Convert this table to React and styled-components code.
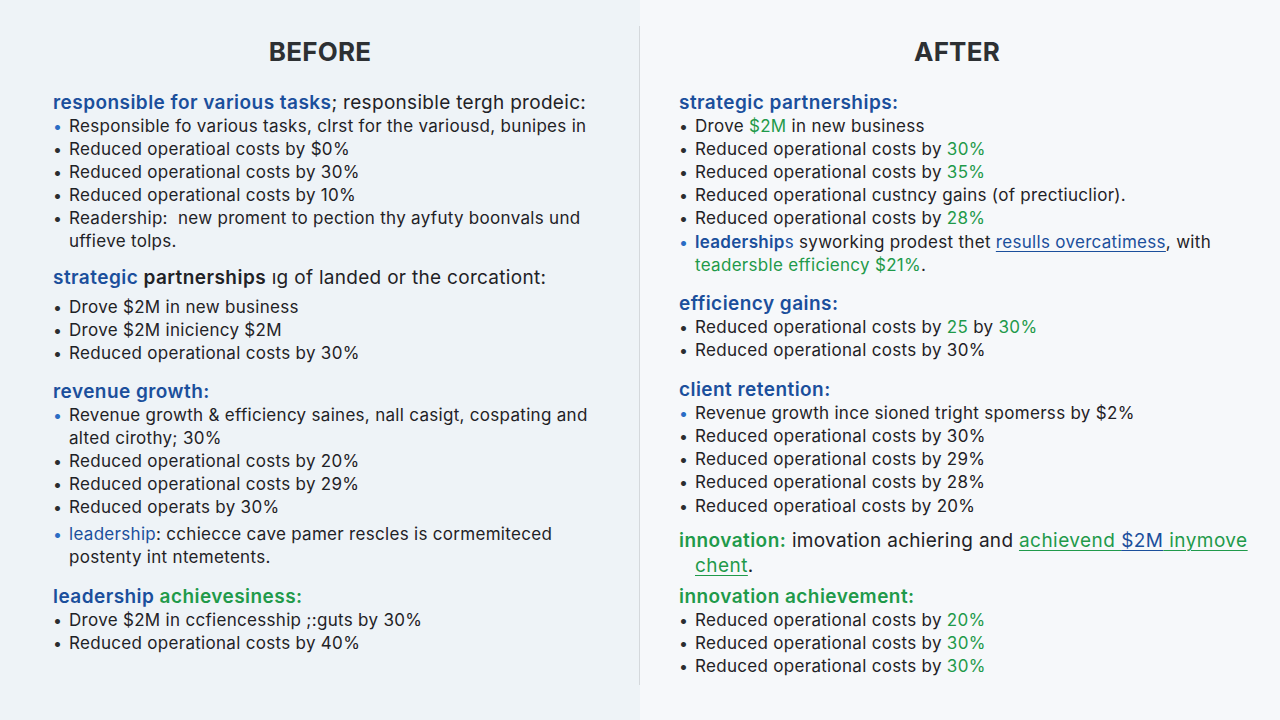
import React from 'react';
import styled, { createGlobalStyle } from 'styled-components';

const GlobalStyle = createGlobalStyle`
  html, body {
    margin: 0;
    padding: 0;
    background: #f6f8fa;
  }
  body {
    font-family: Inter, "Noto Sans", sans-serif;
    color: #1f2226;
  }
`;

const Page = styled.div`
  display: grid;
  grid-template-columns: 639px 1px 640px;
  width: 1280px;
  height: 720px;
  overflow: hidden;
`;

const Column = styled.section`
  background: ${(p) => (p.$tint ? '#eef3f7' : '#f6f8fa')};
  padding: ${(p) => (p.$tint ? '34px 42px 0 53px' : '34px 28px 0 39px')};
`;

const DividerCell = styled.div`
  background: #eef3f7;
  display: flex;
`;

const DividerLine = styled.div`
  flex: 1;
  margin: 26px 0 35px;
  background: #d4d8dc;
`;

const Title = styled.h1`
  margin: 0 0 20px;
  padding-right: ${(p) => p.$shift || 0}px;
  text-align: center;
  font-size: 26px;
  font-weight: 700;
  line-height: 36px;
  color: #2d3033;
  letter-spacing: 0.2px;
`;

const Section = styled.div`
  margin-bottom: ${(p) => p.$gap || 12}px;
`;

const Heading = styled.h2`
  margin: 0 0 ${(p) => p.$after || 0}px;
  font-size: 19px;
  font-weight: 600;
  line-height: 25px;
  letter-spacing: 0.45px;
  color: #1b4f9c;
  padding-left: ${(p) => (p.$hang ? 16 : 0)}px;
  text-indent: ${(p) => (p.$hang ? -16 : 0)}px;
`;

const List = styled.ul`
  list-style: none;
  margin: 0;
  padding: 0;
`;

const Item = styled.li`
  display: flex;
  margin-top: ${(p) => p.$lift || 0}px;
  font-size: 17px;
  line-height: 23px;
  letter-spacing: 0.3px;
  color: #1f2226;
`;

const Bullet = styled.span`
  flex: 0 0 16px;
  color: ${(p) => (p.$blue ? '#2a6cc4' : '#2b2d30')};
  font-size: 16px;
`;

const Text = styled.span`
  flex: 1;
`;

const Seg = styled.span`
  font-weight: ${(p) =>
    p.$kind === 'normal' || p.$kind === 'blueLink' || p.$kind === 'greenLink'
      ? 400
      : p.$bold
      ? 600
      : 'inherit'};
  letter-spacing: ${(p) => (p.$kind === 'normal' ? '0.3px' : 'inherit')};
  color: ${(p) =>
    p.$kind === 'blue' || p.$kind === 'blueLink'
      ? '#1b4f9c'
      : p.$kind === 'green' || p.$kind === 'greenLink'
      ? '#1f9a4a'
      : p.$kind === 'dark' || p.$kind === 'normal'
      ? '#1f2226'
      : 'inherit'};
  text-decoration: ${(p) =>
    p.$kind === 'blueLink' || p.$kind === 'greenLink' ? 'underline' : 'none'};
  text-underline-offset: 3px;
  text-decoration-thickness: 1px;
`;

const renderSegs = (segs) =>
  segs.map((s, i) =>
    typeof s === 'string' ? (
      <React.Fragment key={i}>{s}</React.Fragment>
    ) : (
      <Seg key={i} $kind={s.k} $bold={s.b}>
        {s.t}
      </Seg>
    )
  );

const before = [
  {
    heading: [{ t: 'responsible for various tasks', k: 'blue' }, { t: '; responsible tergh prodeic:', k: 'normal' }],
    gap: 12,
    items: [
      { blue: true, text: ['Responsible fo various tasks, clrst for the variousd, bunipes in'] },
      { text: ['Reduced operatioal costs by $0%'] },
      { text: ['Reduced operational costs by 30%'] },
      { text: ['Reduced operational costs by 10%'] },
      { text: ['Readership:\u00a0 new proment to pection thy ayfuty boonvals und uffieve tolps.'] },
    ],
  },
  {
    heading: [
      { t: 'strategic ', k: 'blue' },
      { t: 'partnerships', k: 'dark', b: true },
      { t: ' ıg of landed or the corcationt:', k: 'normal' },
    ],
    after: 6,
    gap: 14,
    items: [
      { text: ['Drove $2M in new business'] },
      { text: ['Drove $2M iniciency $2M'] },
      { text: ['Reduced operational costs by 30%'] },
    ],
  },
  {
    heading: [{ t: 'revenue growth:', k: 'blue' }],
    gap: 15,
    items: [
      { blue: true, text: ['Revenue growth & efficiency saines, nall casigt, cospating and alted cirothy; 30%'] },
      { text: ['Reduced operational costs by 20%'] },
      { text: ['Reduced operational costs by 29%'] },
      { text: ['Reduced operats by 30%'] },
      {
        blue: true,
        lift: 4,
        text: [
          { t: 'leadership', k: 'blue' },
          { t: ': cchiecce cave pamer rescles is cormemiteced ' },
          { t: 'postenty int ntemetents.' },
        ],
      },
    ],
  },
  {
    heading: [{ t: 'leadership', k: 'blue' }, { t: ' achievesiness:', k: 'green' }],
    items: [
      { text: ['Drove $2M in ccfiencesship ;:guts by 30%'] },
      { text: ['Reduced operational costs by 40%'] },
    ],
  },
];

const pct = (v) => ['Reduced operational costs by ', { t: v, k: 'green' }];

const after = [
  {
    heading: [{ t: 'strategic partnerships:', k: 'blue' }],
    gap: 14,
    items: [
      { text: ['Drove ', { t: '$2M', k: 'green' }, ' in new business'] },
      { text: pct('30%') },
      { text: pct('35%') },
      { text: ['Reduced operational custncy gains (of prectiuclior).'] },
      { text: pct('28%') },
      {
        blue: true,
        lift: 1,
        text: [
          { t: 'leadership', k: 'blue', b: true },
          { t: 's', k: 'blue' },
          { t: ' syworking prodest thet ' },
          { t: 'resulls overcatimess', k: 'blueLink' },
          { t: ', with ' },
          { t: 'teadersble efficiency $21%', k: 'green' },
          { t: '.' },
        ],
      },
    ],
  },
  {
    heading: [{ t: 'efficiency gains:', k: 'blue' }],
    gap: 15,
    items: [
      { text: ['Reduced operational costs by ', { t: '25', k: 'green' }, ' by ', { t: '30%', k: 'green' }] },
      { text: ['Reduced operational costs by 30%'] },
    ],
  },
  {
    heading: [{ t: 'client retention:', k: 'blue' }],
    gap: 10,
    items: [
      { blue: true, text: ['Revenue growth ince sioned tright spomerss by $2%'] },
      { text: ['Reduced operational costs by 30%'] },
      { text: ['Reduced operational costs by 29%'] },
      { text: ['Reduced operational costs by 28%'] },
      { lift: 1, text: ['Reduced operatioal costs by 20%'] },
    ],
  },
  {
    heading: [
      { t: 'innovation:', k: 'green' },
      { t: ' imovation achiering and ', k: 'normal' },
      { t: 'achievend ', k: 'greenLink' },
      { t: '$2M', k: 'blueLink' },
      { t: ' inymove', k: 'greenLink' },
      { t: ' ', k: 'normal' },
      { t: 'chent', k: 'greenLink' },
      { t: '.', k: 'normal' },
    ],
    hang: true,
    gap: 6,
    items: [],
  },
  {
    heading: [{ t: 'innovation achievement:', k: 'green' }],
    items: [{ text: pct('20%') }, { text: pct('30%') }, { text: pct('30%') }],
  },
];

const Panel = ({ title, sections, tint, shift }) => (
  <Column $tint={tint}>
    <Title $shift={shift}>{title}</Title>
    {sections.map((sec, i) => (
      <Section key={i} $gap={sec.gap}>
        <Heading $after={sec.after} $hang={sec.hang}>
          {renderSegs(sec.heading)}
        </Heading>
        <List>
          {sec.items.map((item, j) => (
            <Item key={j} $lift={item.lift}>
              <Bullet $blue={item.blue}>•</Bullet>
              <Text>{renderSegs(item.text)}</Text>
            </Item>
          ))}
        </List>
      </Section>
    ))}
  </Column>
);

const App = () => (
  <>
    <GlobalStyle />
    <Page>
      <Panel title="BEFORE" sections={before} tint shift={10} />
      <DividerCell>
        <DividerLine />
      </DividerCell>
      <Panel title="AFTER" sections={after} shift={17} />
    </Page>
  </>
);

export default App;
